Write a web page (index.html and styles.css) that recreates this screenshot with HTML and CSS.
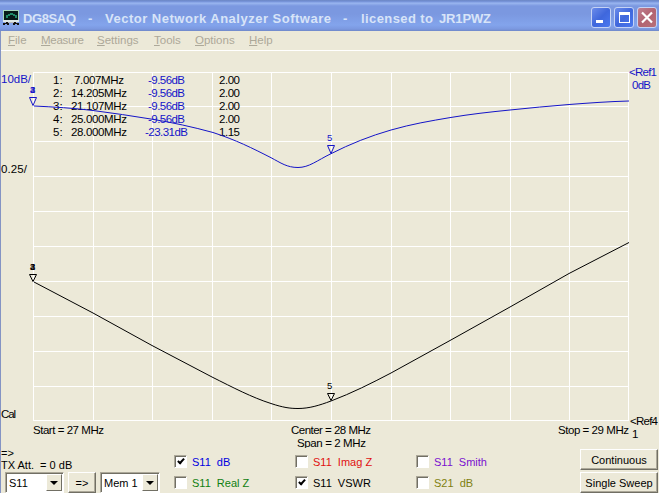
FILE: index.html
```html
<!DOCTYPE html>
<html>
  <head>
    <meta charset="utf-8">
    <title>DG8SAQ - Vector Network Analyzer Software</title>
    <link rel="stylesheet" href="styles.css">
  </head>
  <body>
    <header class="titlebar">
      <svg class="app-icon" width="16" height="16" viewBox="0 0 16 16" shape-rendering="crispEdges">
        <path d="M0 0h16v11H0z" fill="#a5d8bd" />
        <path d="M1 1h14v9H1z" fill="#061b18" />
        <path d="M3 5h2v-1h2v-1h3v1h2v1h2v3h-2v-2h-2v-1H7v1H5v2H3z" fill="#1d8a68" />
        <path d="M0 10h16v2H0z" fill="#dfe8e8" />
        <path d="M2 12h12v1H2z" fill="#b9b9bd" />
        <path d="M3 12h2v1h1v2H4v-1H2v1H0v-2h3zM11 12h2v1h3v2h-2v-1h-2v1h-2v-2h1z" fill="#111" />
      </svg>
      <h1><svg width="430" height="20"><text x="0" y="15" textLength="53">DG8SAQ</text><text x="65" y="15">-</text><text x="82" y="15" textLength="226">Vector Network Analyzer Software</text><text x="320" y="15">-</text><text x="338" y="15" textLength="72">licensed to</text><text x="416" y="15" textLength="52">JR1PWZ</text></svg></h1>
      <div class="window-buttons">
        <button class="win-btn" aria-label="Minimize"><svg width="18" height="19"><path d="M4 12h7v3H4z" fill="#fff" /></svg></button>
        <button class="win-btn" aria-label="Maximize"><svg width="18" height="19"><path d="M4 4h11v11H4zM5 7v7h9V7z" fill="#fff" fill-rule="evenodd" /></svg></button>
        <button class="win-btn close" aria-label="Close"><svg width="18" height="19"><path d="M4 4.500l10 10M14 4.500l-10 10" stroke="#fff" stroke-width="2.200" /></svg></button>
      </div>
    </header>

    <main class="window">
      <nav class="menu">
        <a class="file"><u>F</u>ile</a>
        <a class="measure"><u>M</u>easure</a>
        <a class="settings"><u>S</u>ettings</a>
        <a class="tools"><u>T</u>ools</a>
        <a class="options"><u>O</u>ptions</a>
        <a class="help"><u>H</u>elp</a>
      </nav>

      <svg class="plot" width="658" height="397" viewBox="1 51 658 397">
        <!-- graticule -->
        <path class="grid" d="M33.500 72v349M93.500 72v349M152.500 72v349M212.500 72v349M271.500 72v349M331.500 72v349M391.500 72v349M450.500 72v349M510.500 72v349M569.500 72v349M628.500 72v349
          M33 72.500h596M33 106.500h596M33 141.500h596M33 176.500h596M33 211.500h596M33 246.500h596M33 281.500h596M33 316.500h596M33 351.500h596M33 386.500h596M33 420.500h596" />

        <!-- marker table -->
        <g class="readout">
          <text x="53" y="84">1:</text><text x="74" y="84" textLength="50">7.007MHz</text><text class="db" x="148" y="84" textLength="37">-9.56dB</text><text x="219" y="84" textLength="21">2.00</text>
          <text x="53" y="97">2:</text><text x="71" y="97" textLength="56">14.205MHz</text><text class="db" x="148" y="97" textLength="37">-9.56dB</text><text x="219" y="97" textLength="21">2.00</text>
          <text x="53" y="110">3:</text><text x="71" y="110" textLength="56">21.107MHz</text><text class="db" x="148" y="110" textLength="37">-9.56dB</text><text x="219" y="110" textLength="21">2.00</text>
          <text x="53" y="123">4:</text><text x="71" y="123" textLength="56">25.000MHz</text><text class="db" x="148" y="123" textLength="37">-9.56dB</text><text x="219" y="123" textLength="21">2.00</text>
          <text x="53" y="136">5:</text><text x="71" y="136" textLength="56">28.000MHz</text><text class="db" x="145" y="136" textLength="43">-23.31dB</text><text x="219" y="136" textLength="21">1.15</text>
        </g>

        <!-- traces -->
        <path class="trace db" d="M34 106C54 107 73 108 93 110.500S132 116 152 119.200S193 127 213 132.500C236 140 252 148 271 157.700C281 163 287 167.500 298 167.500C309 167.500 317 160.500 331 153.700C350 144 370 136 391 130S430 121 450 117.600S490 112 510 110S549 106 569 104.500S609 101.500 629 101" />
        <path class="trace" d="M34 282L93 313L152 345.500L212 377C233 387.500 252 397.500 271 403.500C283 407.500 290 408.500 298 408.500C309 408.500 319 405.500 331 401C352 393 371 383.500 391 373L450 340.500L510 307L569 273.500L629 242.500" />

        <!-- markers -->
        <path class="marker db" d="M29.500 97.500h7l-3.500 8z" />
        <path class="marker db" d="M327.500 145.500h7l-3.500 8z" />
        <path class="marker" d="M29.500 274.500h7l-3.500 7z" />
        <path class="marker" d="M327.500 393.500h7l-3.500 7z" />
        <g class="marker-no">
          <g class="db"><text x="30" y="93">2</text><text x="30" y="93">3</text><text x="30" y="93">4</text><text x="327" y="141">5</text></g>
          <text x="30" y="270">2</text><text x="30" y="270">3</text><text x="30" y="270">4</text><text x="327" y="389">5</text>
        </g>

        <!-- axis labels -->
        <text class="db" x="1" y="83" textLength="30">10dB/</text>
        <text x="1" y="173" textLength="26">0.25/</text>
        <text x="1" y="418" textLength="15">Cal</text>
        <text class="db" x="629" y="76" textLength="28">&lt;Ref1</text>
        <text class="db" x="632" y="89" textLength="19">0dB</text>
        <text x="630" y="425" textLength="28">&lt;Ref4</text>
        <text x="632" y="438">1</text>
        <text x="33" y="434" textLength="71">Start = 27 MHz</text>
        <text x="291" y="434" textLength="80">Center = 28 MHz</text>
        <text x="297" y="447" textLength="69">Span = 2 MHz</text>
        <text x="558" y="434" textLength="71">Stop = 29 MHz</text>
      </svg>

      <section class="controls">
        <div class="transfer">
          <div class="status">=&gt;</div>
          <div class="status att">TX Att.&nbsp; = 0 dB</div>
          <div class="transfer-row">
            <div class="combo"><span>S11</span><i class="drop"></i></div>
            <button class="btn arrow">=&gt;</button>
            <div class="combo mem"><span>Mem 1</span><i class="drop"></i></div>
          </div>
        </div>
        <div class="traces">
          <label class="s11-db"><i class="box on"></i>S11&nbsp; dB</label>
          <label class="s11-imag"><i class="box"></i>S11&nbsp; Imag Z</label>
          <label class="s11-smith"><i class="box"></i>S11&nbsp; Smith</label>
          <label class="s11-real"><i class="box"></i>S11&nbsp; Real Z</label>
          <label class="s11-vswr"><i class="box on"></i>S11&nbsp; VSWR</label>
          <label class="s21-db"><i class="box"></i>S21&nbsp; dB</label>
        </div>
        <div class="sweep">
          <button class="btn">Continuous</button>
          <button class="btn">Single Sweep</button>
        </div>
      </section>
    </main>
  </body>
</html>
```

FILE: styles.css
```css
body {
  margin: 0;
  width: 659px;
  height: 493px;
  overflow: hidden;
  background: #ece9d8;
  color: #000;
  font-family: "Liberation Sans", Arial, sans-serif;
  font-size: 11px;
}

svg {
  display: block;
}

.titlebar {
  display: flex;
  align-items: center;
  box-sizing: border-box;
  height: 31px;
  padding: 4px 2px 0 3px;
  background: linear-gradient(#6b86c4 0, #7b98df 2px, #9bb7f0 3px, #7b98e0 6px, #7b98e0 14px, #83a4ec 25px, #7b98e0 29px, #7088c8 31px);
}

.titlebar h1 {
  flex: 1;
  margin: 0 0 0 4px;
  font-size: 13px;
}

.titlebar h1 svg {
  overflow: visible;
}

.titlebar text {
  fill: #d8e4f8;
}

.window-buttons {
  display: flex;
  gap: 3px;
}

.win-btn {
  box-sizing: border-box;
  width: 20px;
  height: 21px;
  padding: 0;
  border: 1px solid #c5d3f5;
  border-radius: 3px;
  background: linear-gradient(135deg, #6b8cea, #3f67dc 50%, #4a78f0);
}

.win-btn.close {
  background: linear-gradient(135deg, #c08090, #b26472 50%, #b87078);
}

.window {
  box-sizing: border-box;
  height: 462px;
  border-left: 1px solid #8494c4;
}

.menu {
  display: flex;
  box-sizing: border-box;
  height: 20px;
  padding: 2px 0 0 7px;
  border-bottom: 1px solid #fff;
  color: #aca899;
  font-size: 11.5px;
  line-height: 14px;
}

.menu a {
  white-space: nowrap;
}

.menu .file { width: 33px; }
.menu .measure { width: 56px; letter-spacing: -0.3px; }
.menu .settings { width: 57px; }
.menu .tools { width: 41px; }
.menu .options { width: 54px; }

.plot text {
  fill: #000;
  font-size: 11.5px;
}

.plot text.db,
.plot .db text {
  fill: #1414c8;
}

.plot .marker-no text {
  font-size: 9.5px;
}

.grid {
  stroke: #fff;
  fill: none;
}

.trace,
.marker {
  fill: none;
  stroke: #000;
}

.trace.db,
.marker.db {
  stroke: #1414c8;
}

.controls {
  display: flex;
  height: 45px;
}

.transfer {
  width: 173px;
}

.status {
  height: 12px;
  line-height: 11px;
}

.transfer-row {
  display: flex;
  gap: 4px;
  padding-left: 4px;
}

.combo {
  display: flex;
  box-sizing: border-box;
  width: 59px;
  height: 21px;
  padding: 1px 1px 1px 3px;
  border: 1px solid;
  border-color: #aca899 #fff #fff #aca899;
  box-shadow: inset 1px 1px #716f64;
  background: #fff;
  line-height: 18px;
}

.combo.mem {
  width: 60px;
}

.combo span {
  flex: 1;
}

.drop {
  box-sizing: border-box;
  width: 16px;
  height: 17px;
  padding: 6px 0 0 3px;
  border: 1px solid;
  border-color: #fff #716f64 #716f64 #fff;
  background: #ece9d8;
}

.drop::after {
  content: "";
  display: block;
  width: 0;
  border: 4px solid transparent;
  border-top-color: #000;
  border-bottom: 0;
}

.btn {
  box-sizing: border-box;
  padding: 0;
  border: 1px solid;
  border-color: #fff #716f64 #716f64 #fff;
  box-shadow: inset -1px -1px #aca899;
  background: #ece9d8;
  color: #000;
  font: 11px "Liberation Sans", Arial, sans-serif;
}

.btn.arrow {
  width: 28px;
  height: 21px;
}

.traces {
  display: grid;
  flex: 1;
  grid-template-columns: 121px 121px 1fr;
  grid-template-rows: 21px 21px;
  padding-top: 3px;
}

.traces label {
  display: flex;
  align-items: center;
  gap: 5px;
  white-space: nowrap;
}

.box {
  position: relative;
  box-sizing: border-box;
  width: 13px;
  height: 13px;
  border: 1px solid;
  border-color: #aca899 #fff #fff #aca899;
  box-shadow: inset 1px 1px #716f64;
  background: #fff;
}

.box.on::after {
  content: "";
  position: absolute;
  left: 4px;
  top: 1px;
  width: 2px;
  height: 5px;
  border: solid #000;
  border-width: 0 2px 2px 0;
  transform: rotate(42deg);
}

.s11-db { color: #0000e0; }
.s11-imag { color: #e01010; }
.s11-smith { color: #7a10d0; }
.s11-real { color: #108010; }
.s21-db { color: #808010; }

.sweep {
  display: grid;
  grid-template-rows: 21px 21px;
  gap: 2px;
  width: 78px;
  padding: 1px 1px 0 0;
}
```
